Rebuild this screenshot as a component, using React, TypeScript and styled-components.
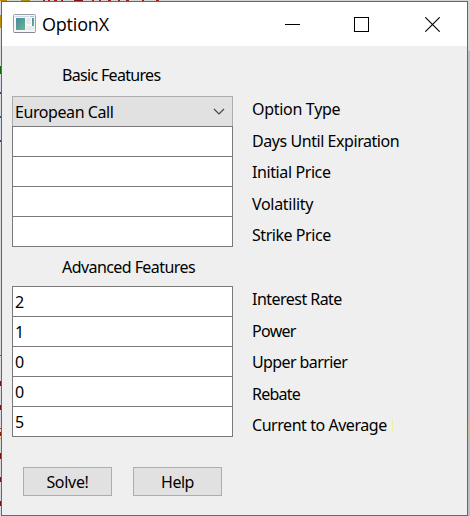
import React from "react";
import styled, { createGlobalStyle } from "styled-components";

const GlobalStyle = createGlobalStyle`
  * { box-sizing: border-box; }
  body { margin: 0; overflow: hidden; background: #c9cdd0; }
`;

const Desktop = styled.div`
  display: grid;
  grid-template-columns: 1px 467px 2px;
  grid-template-rows: 1px 515px;
  width: 470px;
  height: 516px;
  font-family: "Noto Sans", sans-serif;
  font-size: 16px;
  color: #000;
`;

const Backdrop = styled.svg`
  display: block;
`;

const TopEdge = styled(Backdrop)`
  grid-column: 1 / -1;
`;

const AppWindow = styled.main`
  display: flex;
  flex-direction: column;
  border: 1px solid #1b7acb;
  background: #efefef;
`;

const TitleBar = styled.header`
  display: flex;
  align-items: center;
  height: 44px;
  padding: 0 27px 0 11px;
  background: #fff;
`;

const Title = styled.h1`
  flex: 1;
  margin: 0 0 0 5px;
  font: 400 18px/44px "Open Sans", sans-serif;
  letter-spacing: -0.2px;
`;

const WindowControls = styled.div`
  display: grid;
  grid-template-columns: 69px 71px 15px;
`;

const Text = styled.span<{ $spacing?: number }>`
  display: block;
  white-space: nowrap;
  line-height: 22px;
  letter-spacing: ${(p) => p.$spacing ?? -0.3}px;
`;

const SectionHeading = styled.h2<{ $spacing: number; $height: number; $pad: number }>`
  margin: 0;
  height: ${(p) => p.$height}px;
  padding: ${(p) => p.$pad}px 0 0 60px;
  font-size: 16px;
  font-weight: 400;
  line-height: 22px;
  white-space: nowrap;
  letter-spacing: ${(p) => p.$spacing}px;
`;

const Section = styled.section`
  display: grid;
  grid-template-columns: 221px 1fr;
  column-gap: 19px;
  height: 151px;
  padding-left: 10px;
`;

const Fields = styled.div`
  display: flex;
  flex-direction: column;
`;

const Labels = styled.div`
  display: flex;
  flex-direction: column;
  padding-top: 2px;
`;

const LabelRow = styled.div`
  display: flex;
  align-items: flex-start;
  flex: 0 0 31.5px;
`;

const Caret = styled.i`
  width: 1px;
  height: 12px;
  margin: 5px 0 0 5px;
  background: #f2ec9c;
`;

const Field = styled.div`
  height: 31px;
  border: 1px solid #7a7a7a;
  background: #fff;
  padding: 4px 0 0 2px;
  & + & { margin-top: -1px; }
`;

const Combo = styled.div`
  display: flex;
  justify-content: space-between;
  height: 30px;
  border: 1px solid #adadad;
  border-bottom: 0;
  background: #e1e1e1;
  padding: 4px 7px 0 2px;
`;

const Actions = styled.footer`
  display: flex;
  gap: 21px;
  padding: 30px 0 0 21px;
`;

const Button = styled.button`
  display: flex;
  justify-content: center;
  width: 89px;
  height: 29px;
  padding: 3px 0 0;
  border: 1px solid #adadad;
  background: #e1e1e1;
  color: #000;
  font: inherit;
`;

const topMarks: [number, number, string][] = [
  [0, 7, "#b8860b"], [21, 9, "#a88c15"], [43, 2, "#a02020"], [48, 2, "#a02020"],
  [54, 3, "#a02020"], [61, 2, "#a02020"], [74, 9, "#8b1010"], [92, 2, "#a02020"],
  [99, 2, "#a02020"], [108, 3, "#a02020"], [118, 2, "#a02020"], [126, 3, "#a02020"],
  [142, 2, "#a02020"], [156, 3, "#a02020"],
];

const leftMarks: [number, number, string][] = [
  [15, 13, "#c28a0c"], [66, 8, "#0c7010"], [92, 2, "#45456c"], [116, 2, "#20606c"],
  [140, 2, "#45456c"], [355, 1, "#a83c28"], [381, 5, "#7c1010"], [405, 5, "#7c1010"],
  [428, 1, "#a83c28"], [432, 4, "#981b08"], [438, 1, "#c4a22c"], [453, 6, "#7c1010"],
  [477, 5, "#7c1010"], [501, 5, "#7c1010"],
];

const AppIcon = () => (
  <svg width="24" height="20" viewBox="0 0 24 20">
    <defs>
      <linearGradient id="pane" x2="1" y2="1">
        <stop stopColor="#4787a5" />
        <stop offset="1" stopColor="#65b989" />
      </linearGradient>
    </defs>
    <rect x=".5" y=".5" width="22" height="18" rx="1" fill="#f5f6f7" stroke="#9b9fa8" />
    <path d="M2 2.5h14" stroke="#d0d7de" />
    <path d="M17 2.5h4" stroke="#a9bfd6" />
    <path d="M1 18.5h21" stroke="#858a93" />
    <rect x="3" y="4" width="9" height="12" fill="url(#pane)" />
    <rect x="13.5" y="4" width="4" height="6" fill="#e3e7ea" />
    <rect x="19" y="4" width="2" height="8" fill="url(#pane)" />
    <rect x="13.5" y="12" width="7.5" height="4" fill="#e7e9eb" />
  </svg>
);

const basicLabels: [string, number][] = [
  ["Option Type", -0.3], ["Days Until Expiration", -0.44], ["Initial Price", -0.4],
  ["Volatility", -0.3], ["Strike Price", -0.45],
];
const advancedLabels: [string, number][] = [
  ["Interest Rate", -0.53], ["Power", -0.7], ["Upper barrier", -0.6],
  ["Rebate", -0.75], ["Current to Average", -0.45],
];

export default function App() {
  return (
    <>
      <GlobalStyle />
      <Desktop>
        <TopEdge width="470" height="1">
          <rect width="470" height="1" fill="#d5d5d3" />
          {topMarks.map(([x, w, c]) => <rect key={x} x={x} width={w} height="1" fill={c} />)}
        </TopEdge>
        <Backdrop width="1" height="515" viewBox="0 1 1 515">
          <rect y="1" width="1" height="515" fill="#d7dade" />
          {leftMarks.map(([y, h, c]) => <rect key={y} y={y} width="1" height={h} fill={c} />)}
        </Backdrop>
        <AppWindow>
          <TitleBar>
            <AppIcon />
            <Title>OptionX</Title>
            <WindowControls>
              <svg width="15" height="15" shapeRendering="crispEdges"><path d="M0 7.5h15" stroke="#000" /></svg>
              <svg width="15" height="15" shapeRendering="crispEdges"><path d="M.5.5h14v14H.5z" fill="none" stroke="#000" /></svg>
              <svg width="15" height="15"><path d="M.3.3l14.4 14.4M14.7.3L.3 14.7" stroke="#000" strokeWidth="1.1" /></svg>
            </WindowControls>
          </TitleBar>
          <SectionHeading $spacing={-0.68} $height={50} $pad={18}>Basic Features</SectionHeading>
          <Section>
            <Fields>
              <Combo>
                <Text $spacing={-0.42}>European Call</Text>
                <svg width="12" height="22"><path d="M1 8l5 5 5-5" fill="none" stroke="#444" strokeWidth="1.2" /></svg>
              </Combo>
              {["days", "price", "volatility", "strike"].map((k) => <Field key={k} />)}
            </Fields>
            <Labels>
              {basicLabels.map(([t, s]) => <LabelRow key={t}><Text $spacing={s}>{t}</Text></LabelRow>)}
            </Labels>
          </Section>
          <SectionHeading $spacing={-0.57} $height={39} $pad={9}>Advanced Features</SectionHeading>
          <Section>
            <Fields>
              {["2", "1", "0", "0", "5"].map((v, i) => <Field key={i}><Text>{v}</Text></Field>)}
            </Fields>
            <Labels>
              {advancedLabels.map(([t, s]) => (
                <LabelRow key={t}>
                  <Text $spacing={s}>{t}</Text>
                  {t === "Current to Average" && <Caret />}
                </LabelRow>
              ))}
            </Labels>
          </Section>
          <Actions>
            <Button><Text>Solve!</Text></Button>
            <Button><Text $spacing={-0.5}>Help</Text></Button>
          </Actions>
        </AppWindow>
        <Backdrop width="2" height="515" viewBox="0 1 2 515">
          <rect y="1" width="2" height="515" fill="#b8bec4" />
          <rect y="1" width="2" height="50" fill="#d0d3d6" />
          <rect y="419" width="2" height="21" fill="#c8bfa8" />
        </Backdrop>
      </Desktop>
    </>
  );
}
